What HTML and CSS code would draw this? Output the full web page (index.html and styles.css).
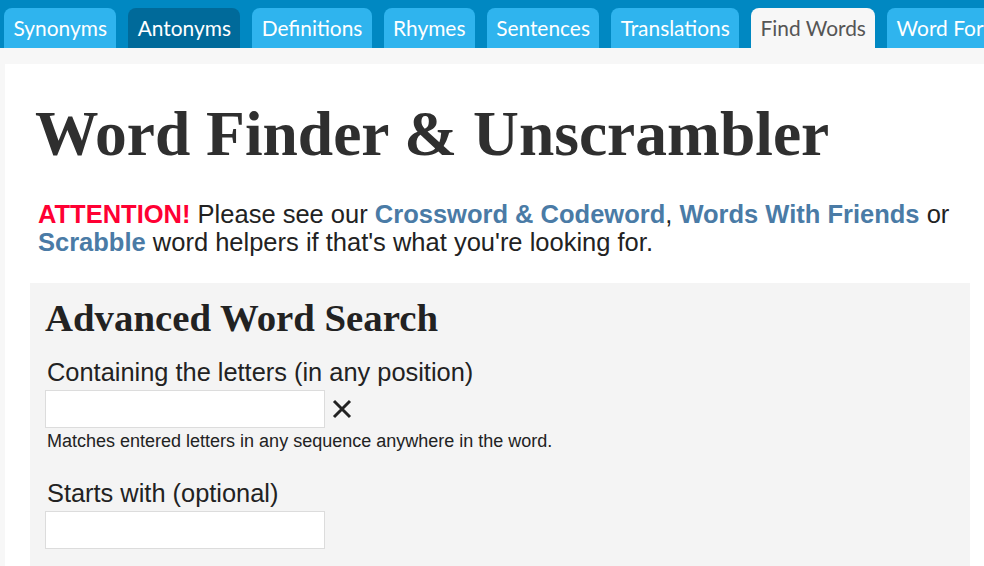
FILE: index.html
```html
<!DOCTYPE html>
<html lang="en">
<head>
<meta charset="utf-8">
<title>Word Finder &amp; Unscrambler</title>
<link rel="stylesheet" href="styles.css">
</head>
<body>
<nav class="tabs">
  <a class="tab">Synonyms</a>
  <a class="tab tab-dark">Antonyms</a>
  <a class="tab">Definitions</a>
  <a class="tab">Rhymes</a>
  <a class="tab">Sentences</a>
  <a class="tab">Translations</a>
  <a class="tab tab-active">Find Words</a>
  <a class="tab">Word Forms</a>
</nav>
<main class="page">
  <h1 class="title">Word Finder &amp; Unscrambler</h1>
  <p class="notice"><span class="attn">ATTENTION!</span> Please see our <a class="link">Crossword &amp; Codeword</a>, <a class="link">Words With Friends</a> or <a class="link">Scrabble</a> word helpers if that's what you're looking for.</p>
  <section class="search">
    <h2 class="search-title">Advanced Word Search</h2>
    <label class="field-label">Containing the letters (in any position)</label>
    <div class="field-row">
      <input class="field" type="text">
      <svg class="clear" width="22" height="22" viewBox="0 0 22 22"><path d="M3 3L19 19M19 3L3 19" stroke="#222" stroke-width="3" fill="none"/></svg>
    </div>
    <div class="hint">Matches entered letters in any sequence anywhere in the word.</div>
    <label class="field-label second">Starts with (optional)</label>
    <div class="field-row">
      <input class="field" type="text">
    </div>
  </section>
</main>
</body>
</html>
```
FILE: styles.css
```css
html, body {
  margin: 0;
  padding: 0;
  overflow: hidden;
}
body {
  background: #f7f7f7;
  font-family: "Liberation Sans", Arial, sans-serif;
  color: #222;
  width: 984px;
  height: 566px;
}
.tabs {
  display: flex;
  gap: 11.7px;
  height: 48px;
  box-sizing: border-box;
  padding: 8px 0 0 4px;
  background: #0088c2;
  white-space: nowrap;
  overflow: hidden;
}
.tab {
  flex: none;
  font-family: Lato, sans-serif;
  font-size: 20.9px;
  line-height: 40px;
  padding: 0 9.5px;
  color: #fff;
  background: #2fb4ee;
  border-radius: 8px 8px 0 0;
}
.tab-dark {
  background: #006a9a;
}
.tab-active {
  background: #f7f7f7;
  color: #555;
}
.page {
  margin: 16px 0 0 5px;
  background: #fff;
  padding: 34px 14px 0 25px;
  height: 500px;
}
.title {
  margin: 0 0 0 5px;
  font-family: "Liberation Serif", "Times New Roman", serif;
  font-weight: bold;
  font-size: 63.5px;
  line-height: 72px;
  color: #2f2f2f;
}
.notice {
  margin: 30px 0 0 8px;
  font-size: 25.5px;
  line-height: 28px;
  color: #222;
}
.attn {
  color: #ff0033;
  font-weight: bold;
}
.link {
  color: #4a7ba6;
  font-weight: bold;
}
.search {
  margin-top: 27px;
  background: #f4f4f4;
  padding: 13px 15px 20px 15px;
}
.search-title {
  margin: 0;
  font-family: "Liberation Serif", "Times New Roman", serif;
  font-weight: bold;
  font-size: 38.8px;
  line-height: 44px;
  color: #222;
}
.field-label {
  display: block;
  margin: 18px 0 4px 2px;
  font-size: 25.4px;
  line-height: 28px;
}
.field-label.second {
  margin-top: 28px;
}
.field-row {
  display: flex;
  align-items: center;
  gap: 6px;
  height: 38px;
}
.field {
  box-sizing: border-box;
  width: 280px;
  height: 38px;
  margin: 0;
  border: 1px solid #dcdcdc;
  background: #fff;
}
.clear {
  display: block;
}
.hint {
  margin: 3px 0 0 2px;
  font-size: 18px;
  line-height: 20px;
}
```
